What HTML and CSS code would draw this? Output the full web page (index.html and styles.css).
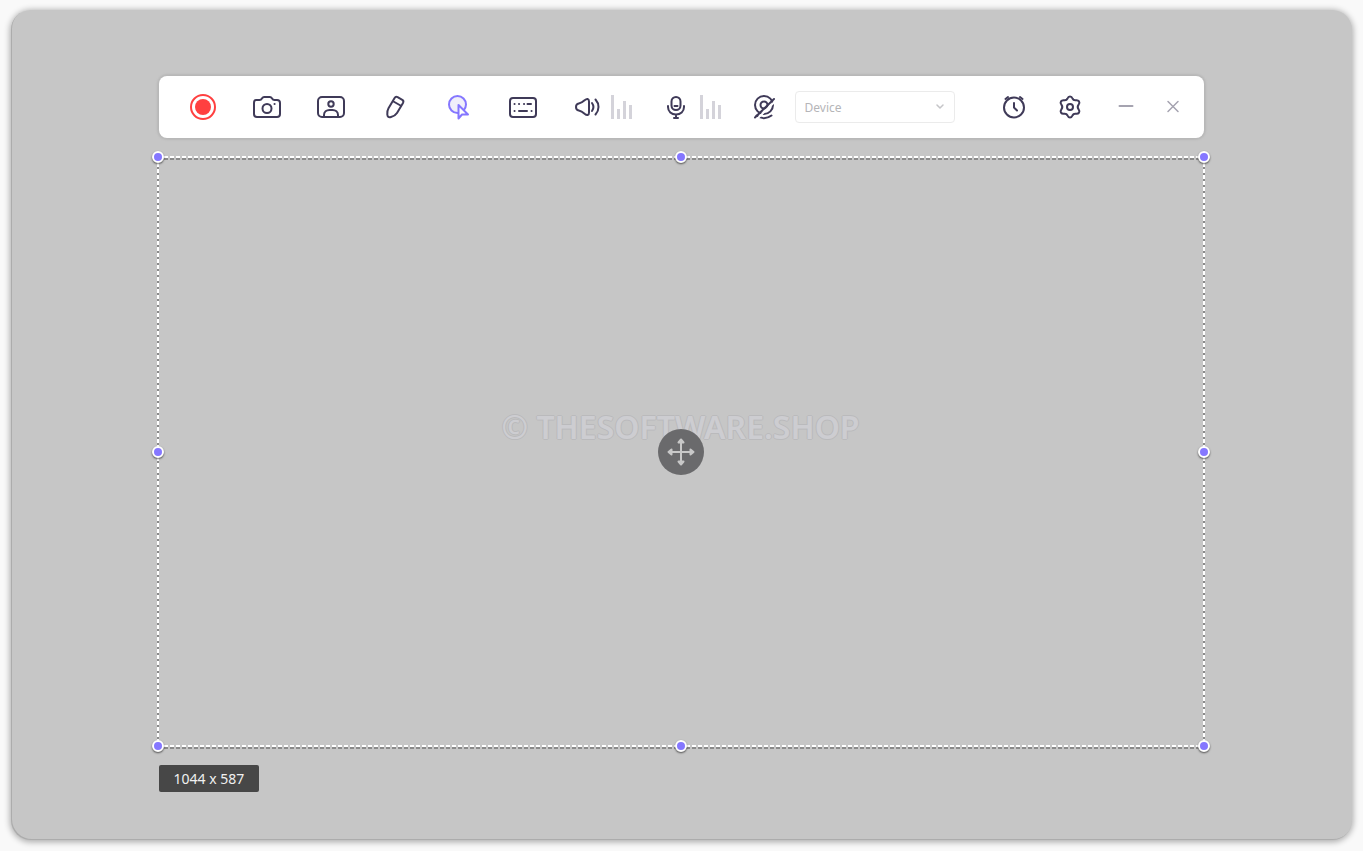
FILE: index.html
```
<!doctype html>
<html lang="en">
<head>
	<meta charset="utf-8">
	<meta name="viewport" content="width=device-width, initial-scale=1">
	<title>Screen Recorder</title>
	<link rel="stylesheet" href="styles.css">
</head>
<body>
	<main class="screen">
		<div class="toolbar">
			<div class="tools">
				<button class="tool record" type="button" aria-label="Record">
					<svg viewBox="0 0 32 32"><circle cx="16" cy="16" r="12"/><circle class="dot" cx="16" cy="16" r="8"/></svg>
				</button>
				<button class="tool" type="button" aria-label="Screenshot">
					<svg viewBox="0 0 32 32"><path d="M5 9h3.500c1.500 0 2-.7 2.600-1.800.5-.8 1-1.200 2-1.200h5.800c1 0 1.500.4 2 1.200.6 1.100 1.100 1.800 2.600 1.800H26c2 0 3 1 3 3v11c0 2-1 3-3 3H6c-2 0-3-1-3-3V12c0-2 .6-3 2-3z"/><circle cx="16" cy="17.500" r="4.500"/><path d="M23.500 13h.1"/></svg>
				</button>
				<button class="tool" type="button" aria-label="Webcam frame">
					<svg viewBox="0 0 32 32"><rect x="3" y="6" width="26" height="20" rx="4"/><circle cx="16" cy="13" r="2.700"/><path d="M9 25.500v-1.500c0-3 2.500-5 5.500-5h3c3 0 5.500 2 5.500 5v1.500"/></svg>
				</button>
				<button class="tool" type="button" aria-label="Draw">
					<svg viewBox="0 0 32 32"><path d="M15.600 7C16.300 5.800 17.300 5.500 18.600 6.200L23.300 8.900c1.200.7 1.400 1.700.7 3L18 22c-1.200 2-3.500 3.300-6 4-2.400.7-3.500 0-3.700-2.500-.2-2.300 0-4.300 1.200-6.300zM14.500 10.500l7 4"/></svg>
				</button>
				<button class="tool active" type="button" aria-label="Mouse effects">
					<svg viewBox="0 0 32 32"><circle class="halo" cx="14.500" cy="13.500" r="8.500"/><path class="cursor" d="M15.500 14v13.500l3.500-4h6z"/></svg>
				</button>
				<button class="tool" type="button" aria-label="Keyboard">
					<svg viewBox="0 0 32 32"><rect x="3" y="7" width="26" height="19" rx="3"/><path d="M7.500 13h.1M12 13h.1M17 13h.1M20.500 13H24M7.500 20h.1M12 20h8M24.500 20h.1"/></svg>
				</button>
				<div class="sound">
					<button class="tool" type="button" aria-label="System sound">
						<svg viewBox="0 0 32 32"><path d="M5 16c0-2.500.6-3.200 2.800-3.600 2-.4 4-1.600 5.800-3.200C16 7.200 18 7.500 18 10.500v11c0 3-2 3.300-4.400 1.300-1.800-1.600-3.800-2.800-5.800-3.200C5.600 19.200 5 18.500 5 16zM21 12c1.800 2.500 1.800 5.500 0 8M24.500 8.500c4 4.500 4 10.500 0 15"/></svg>
					</button>
					<div class="level"><i></i><i></i><i></i><i></i></div>
				</div>
				<div class="sound mic">
					<button class="tool" type="button" aria-label="Microphone">
						<svg viewBox="0 0 32 32"><rect x="11.500" y="6" width="9" height="13" rx="4.500"/><path d="M8 15v1c0 4.500 3.500 7.500 8 7.500s8-3 8-7.500v-1M16 23.500V27M14 27h4M14.500 15h3"/></svg>
					</button>
					<div class="level"><i></i><i></i><i></i><i></i></div>
				</div>
				<div class="webcam">
					<button class="tool" type="button" aria-label="Webcam off">
						<svg viewBox="0 0 32 32"><circle cx="16" cy="14" r="9"/><circle cx="16" cy="14" r="3.500"/><path d="M8.500 24.500c4.500 3.500 10.500 3.500 15 0"/><path class="cut" d="M8.500 28.500L27.500 10"/><path d="M7 26.500L26 8"/></svg>
					</button>
					<label class="device">
						<select aria-label="Device"><option>Device</option></select>
						<svg viewBox="0 0 8 6"><path d="M1 1l3 3 3-3"/></svg>
					</label>
				</div>
			</div>
			<div class="options">
				<button class="tool" type="button" aria-label="Schedule">
					<svg viewBox="0 0 32 32"><circle cx="16" cy="16.500" r="10"/><path d="M16 12v4.500l3 3M7.500 8l2.500-2M24.500 8L22 6"/></svg>
				</button>
				<button class="tool" type="button" aria-label="Settings">
					<svg viewBox="0 0 32 32"><path d="M13.500 7.500c1-2.700 4-2.700 5 0 .7 1.700 1.500 2 3.300 1.800 2.900-.5 4.700 2 2.800 4.400-1.200 1.500-1.200 3.100 0 4.600 1.900 2.400.1 4.900-2.800 4.400-1.800-.2-2.600.1-3.300 1.800-1 2.700-4 2.700-5 0-.7-1.700-1.500-2-3.300-1.800-2.900.5-4.700-2-2.800-4.400 1.200-1.500 1.200-3.100 0-4.600-1.900-2.400-.1-4.900 2.800-4.400 1.800.2 2.600-.1 3.300-1.800z"/><circle cx="16" cy="16" r="3"/></svg>
				</button>
				<button class="tool window" type="button" aria-label="Minimize">
					<svg viewBox="0 0 32 32"><path d="M9.500 15h13"/></svg>
				</button>
				<button class="tool window close" type="button" aria-label="Close">
					<svg viewBox="0 0 32 32"><path d="M11 10.500l10 10M21 10.500l-10 10"/></svg>
				</button>
			</div>
		</div>
		<div class="capture">
			<i class="edge top"></i>
			<i class="edge right"></i>
			<i class="edge bottom"></i>
			<i class="edge left"></i>
			<span class="watermark">© THESOFTWARE.SHOP</span>
			<button class="move" type="button" aria-label="Move area">
				<svg viewBox="0 0 46 46"><path d="M23 12v22M12 23h22"/><path class="tip" d="M23 10.500l-2.500 3h5zM23 35.500l-2.500-3h5zM10.500 23l3-2.500v5zM35.500 23l-3-2.500v5z"/></svg>
			</button>
			<i class="handle n"></i>
			<i class="handle n e"></i>
			<i class="handle e"></i>
			<i class="handle s e"></i>
			<i class="handle s"></i>
			<i class="handle s w"></i>
			<i class="handle w"></i>
			<i class="handle n w"></i>
		</div>
		<output class="size">1044 x 587</output>
	</main>
</body>
</html>
```
FILE: styles.css
```
* {
	box-sizing: border-box;
}
body {
	margin: 0;
	min-height: 100vh;
	padding: 10px 11px 11px;
	display: flex;
	background: #f9f9f9;
	font-family: "Noto Sans", sans-serif;
}
button {
	border: 0;
	padding: 0;
	background: none;
	cursor: pointer;
}
svg {
	display: block;
	fill: none;
	stroke: currentColor;
	stroke-width: 2;
	stroke-linecap: round;
	stroke-linejoin: round;
}

.screen {
	flex: 1;
	display: flex;
	flex-direction: column;
	align-items: stretch;
	padding: 66px calc(11% + 1px) 48px 11%;
	border-radius: 20px;
	background: #c6c6c6;
	box-shadow: 0 1px 6px 1px rgba(0, 0, 0, .32), inset 1px -1px 0 #acacac;
}

/* toolbar */
.toolbar {
	display: flex;
	align-items: center;
	justify-content: space-between;
	height: 62px;
	padding: 0 15px 0 28px;
	border-radius: 8px;
	background: #fff;
	box-shadow: 0 0 2px 2px #b8b8b8;
}
.tools {
	display: flex;
	align-items: center;
	gap: 32px;
}
.tool {
	flex: none;
	width: 32px;
	height: 32px;
	color: #3f3a58;
}
.record {
	color: #ff4040;
}
.dot {
	fill: currentColor;
	stroke: none;
}
.active {
	color: #8577ff;
}
.halo {
	fill: #f0effa;
}
.cursor {
	fill: #fff;
}
.cut {
	stroke: #fff;
}
.sound, .webcam {
	display: flex;
	align-items: center;
	gap: 8px;
}
.mic {
	margin: 0 -5px 0 -4px;
}
.webcam {
	gap: 15px;
}
.level {
	display: flex;
	align-items: flex-end;
	gap: 3px;
	height: 24px;
}
.level i {
	width: 3px;
	height: 24px;
	background: #d4d3da;
}
.level i:nth-child(2) {
	height: 10px;
}
.level i:nth-child(3) {
	height: 18px;
}
.level i:nth-child(4) {
	height: 14px;
}
.device {
	display: grid;
	align-items: center;
}
.device > * {
	grid-area: 1 / 1;
}
.device select {
	appearance: none;
	width: 160px;
	height: 32px;
	padding: 0 9px;
	border: 1px solid #ebebeb;
	border-radius: 4px;
	background: #fff;
	color: #b5b5b8;
	font: 12px "Noto Sans", sans-serif;
}
.device svg {
	justify-self: end;
	width: 8px;
	margin-right: 11px;
	color: #c5c5c8;
	stroke-width: 1.5;
	pointer-events: none;
}
.options {
	display: flex;
	gap: 24px;
}
.window {
	color: #a5a3b0;
}
.close {
	margin-left: -9px;
}
.close svg {
	stroke-width: 1.5;
}

/* capture area */
.capture {
	position: relative;
	flex: 1;
	display: flex;
	align-items: center;
	justify-content: center;
	min-height: 300px;
	margin: 19px 0 19px -1px;
}
.edge {
	position: absolute;
}
.top, .bottom {
	left: 0;
	right: 0;
	height: 4px;
	background:
		repeating-linear-gradient(90deg, #fff 0 4px, transparent 4px 6px) top / 100% 2px no-repeat,
		repeating-linear-gradient(90deg, #8a8a8a 0 4px, transparent 4px 6px) bottom / 100% 2px no-repeat;
}
.left, .right {
	top: 0;
	bottom: 0;
	width: 2px;
	background: repeating-linear-gradient(#fff 0 4px, #8a8a8a 4px 6px);
}
.top {
	top: -1px;
}
.bottom {
	bottom: -3px;
}
.left {
	left: -1px;
}
.right {
	right: -1px;
}
.watermark {
	position: absolute;
	top: 50%;
	left: 50%;
	transform: translate(-50%, -45px);
	color: #cdcdd1;
	font-size: 32px;
	line-height: 40px;
	font-weight: 600;
	white-space: nowrap;
	text-shadow: -1px 0 #bababc, 1px 0 #bababc, 0 1px #bababc, 0 -1px #bababc;
}
.move {
	position: relative;
	width: 46px;
	height: 46px;
	border-radius: 50%;
	background: #6a6a6c;
	color: #c8c8c8;
}
.tip {
	fill: currentColor;
}
.handle {
	position: absolute;
	top: 50%;
	left: 50%;
	width: 12px;
	height: 12px;
	margin: -6px;
	border: 2px solid #fff;
	border-radius: 50%;
	background: #8577ff;
	box-shadow: 0 1px 2px rgba(0, 0, 0, .6);
}
.n {
	top: 0;
}
.s {
	top: 100%;
}
.e {
	left: 100%;
}
.w {
	left: 0;
}

.size {
	align-self: flex-start;
	padding: 0 15px;
	border-radius: 2px;
	background: #474747;
	color: #f0f0f0;
	font-size: 14px;
	line-height: 27px;
}
```
